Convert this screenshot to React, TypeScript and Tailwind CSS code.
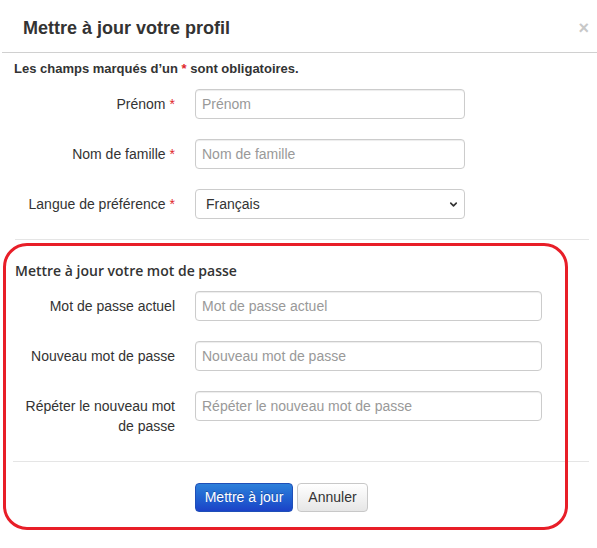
import { ChevronDown } from "lucide-react";

const ARIAL = "font-['Liberation_Sans',Arial,sans-serif]";

function Req() {
  return <span className="text-[#e0262b] ml-1">*</span>;
}

function Row({ label, required, children }: { label: React.ReactNode; required?: boolean; children: React.ReactNode }) {
  return (
    <div className="flex items-start">
      <label className="w-[161px] pt-[5px] text-right text-[14px] leading-5 text-[#333]">
        {label}
        {required && <Req />}
      </label>
      <div className="ml-[20px]">{children}</div>
    </div>
  );
}

function TextInput({ placeholder, width }: { placeholder: string; width: string }) {
  return (
    <input
      type="text"
      placeholder={placeholder}
      className={`${width} h-[30px] rounded-[4px] border border-[#cccccc] bg-white px-[6px] text-[14px] text-[#555] placeholder:text-[#999] shadow-[inset_0_1px_1px_rgba(0,0,0,0.075)] outline-none`}
    />
  );
}

export default function App() {
  return (
    <div className={`relative w-[597px] h-[548px] overflow-hidden bg-white ${ARIAL}`}>
      {/* header */}
      <div className="ml-[2px] flex h-[53px] items-center justify-between border-b border-[#d0d0d0] pl-[21px] pr-[8px] pt-[4px]">
        <h3 className="text-[18px] font-bold text-[#333]">Mettre à jour votre profil</h3>
        <span className="text-[18px] font-bold leading-none text-[#c8c8c8]">×</span>
      </div>

      {/* body */}
      <div className="pl-[14px]">
        <p className="mt-[6px] text-[13px] font-bold leading-5 text-[#333]">
          Les champs marqués d’un <span className="text-[#e0262b]">*</span> sont obligatoires.
        </p>

        <div className="mt-[10px] flex flex-col gap-[20px]">
          <Row label="Prénom" required>
            <TextInput placeholder="Prénom" width="w-[270px]" />
          </Row>
          <Row label="Nom de famille" required>
            <TextInput placeholder="Nom de famille" width="w-[270px]" />
          </Row>
          <Row label="Langue de préférence" required>
            <div className="relative w-[270px] h-[30px]">
              <select className="h-full w-full appearance-none rounded-[4px] border border-[#cccccc] bg-white pl-[10px] text-[14px] text-[#333] outline-none">
                <option>Français</option>
              </select>
              <ChevronDown className="pointer-events-none absolute right-[6px] top-[10px] h-[11px] w-[11px] text-[#333]" strokeWidth={3.5} />
            </div>
          </Row>
        </div>

        <div className="mt-[20px] ml-[1px] mr-[8px] border-t border-[#e5e5e5]" />

        <h4 className="mt-[21px] ml-[1px] font-['Open_Sans',sans-serif] text-[14px] font-semibold leading-5 text-[#333]">
          Mettre à jour votre mot de passe
        </h4>

        <div className="mt-[10px] flex flex-col gap-[20px]">
          <Row label="Mot de passe actuel">
            <TextInput placeholder="Mot de passe actuel" width="w-[347px]" />
          </Row>
          <Row label="Nouveau mot de passe">
            <TextInput placeholder="Nouveau mot de passe" width="w-[347px]" />
          </Row>
          <Row label={<>Répéter le nouveau mot<br />de passe</>}>
            <TextInput placeholder="Répéter le nouveau mot de passe" width="w-[347px]" />
          </Row>
        </div>

        <div className="mt-[25px] ml-[-1px] mr-[8px] border-t border-[#e5e5e5]" />

        <div className="mt-[21px] flex gap-[4px] pl-[181px]">
          <button className="h-[29px] w-[98px] rounded-[4px] border border-[#1f4fb8] bg-gradient-to-b from-[#2e80da] to-[#1c42c7] text-[14px] text-white [text-shadow:0_-1px_0_rgba(0,0,0,0.25)]">
            Mettre à jour
          </button>
          <button className="h-[29px] w-[71px] rounded-[4px] border border-[#c8c8c8] bg-gradient-to-b from-white to-[#e6e6e6] text-[14px] text-[#333]">
            Annuler
          </button>
        </div>
      </div>

      {/* red annotation highlight */}
      <div className="pointer-events-none absolute left-[3px] top-[243px] h-[287px] w-[565px] rounded-[24px] border-[3px] border-[#e81e28]" />
    </div>
  );
}
